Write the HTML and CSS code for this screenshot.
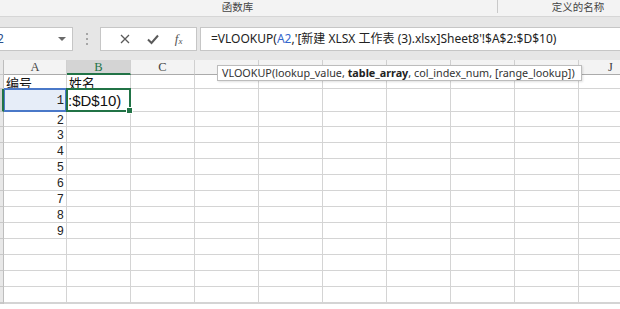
FILE: index.html
```html
<!DOCTYPE html>
<html lang="zh-CN">
<head>
  <meta charset="UTF-8" />
  <title>VLOOKUP</title>
  <link rel="stylesheet" href="styles.css">
</head>
<body>
  <div class="ribbon">
    <div class="group group-func">函数库</div>
    <div class="group group-name">定义的名称</div>
  </div>

  <div class="fbar">
    <div class="namebox">
      <span class="nb-text">2</span>
      <span class="nb-arrow"></span>
    </div>
    <div class="grip"><i></i><i></i><i></i></div>
    <div class="fbtns">
      <svg width="12" height="12" viewBox="0 0 12 12"><path d="M2 2 L10 10 M10 2 L2 10" stroke="#5a5a5a" stroke-width="1.3" fill="none"/></svg>
      <svg width="14" height="12" viewBox="0 0 14 12"><path d="M2 6.5 L5.5 10 L12 2.5" stroke="#5a5a5a" stroke-width="2" fill="none"/></svg>
      <span class="fx">f<sub>x</sub></span>
    </div>
    <div class="finput">=VLOOKUP(<span class="ref">A2</span>,'[新建 XLSX 工作表 (3).xlsx]Sheet8'!$A$2:$D$10)</div>
  </div>

  <div class="sheet">
    <div class="grid" id="grid"></div>
    <div class="tip">VLOOKUP(lookup_value, <b>table_array</b>, col_index_num, [range_lookup])</div>
  </div>

  <script>
    // header letters under the tooltip are covered, so only these show
    const cols = ["A", "B", "C", "", "", "", "", "", "", "J"];
    const rows = [
      ["编号", "姓名"],
      ["1", ":$D$10)"],
      ["2"], ["3"], ["4"], ["5"], ["6"], ["7"], ["8"], ["9"],
      [], [], [], [], []
    ];

    function buildGrid() {
      const grid = document.getElementById("grid");
      let html = '<div class="strip"></div>';
      html += cols.map(c => `<div class="hdr${c === "B" ? " active" : ""}">${c}</div>`).join("");

      rows.forEach((row, r) => {
        html += `<div class="strip${r === 1 ? " cur" : ""}"></div>`;
        cols.forEach((c, i) => {
          const val = row[i] || "";
          let cls = "cell";
          if (r === 0) cls += " cjk";
          else if (i === 0 && val) cls += " num";
          if (r === 1 && i === 0) cls += " ref-sel";
          if (r === 1 && i === 1) cls += " active-cell";
          html += `<div class="${cls}">${val}</div>`;
        });
      });
      grid.innerHTML = html;
    }

    buildGrid();
  </script>
</body>
</html>
```

FILE: styles.css
```css
* {
  box-sizing: border-box;
  margin: 0;
  padding: 0;
}
body {
  width: 620px;
  height: 309px;
  overflow: hidden;
  background: #fff;
  font-family: "Noto Sans", "Noto Sans CJK SC", sans-serif;
}

/* ribbon group labels */
.ribbon {
  display: flex;
  height: 17px;
  background: #f3f3f3;
  border-bottom: 1px solid #d6d6d6;
  overflow: hidden;
}
.group {
  font-size: 10.5px;
  line-height: 15px;
  color: #444;
  text-align: center;
  flex: none;
}
.group-func {
  width: 498px;
  padding-right: 22px;
  border-right: 1px solid #c9c9c9;
  height: 13px;
}
.group-name {
  width: 160px;
}

/* formula bar */
.fbar {
  display: flex;
  align-items: center;
  height: 43px;
  background: #e6e6e6;
  padding-bottom: 9px;
  padding-top: 9px;
}
.namebox {
  width: 73px;
  height: 24px;
  background: #fff;
  border: 1px solid #c6c6c6;
  border-left: none;
  display: flex;
  align-items: center;
  justify-content: space-between;
  padding-right: 6px;
}
.nb-text {
  font-size: 12px;
  color: #2b4f8c;
  margin-left: -3px;
}
.nb-arrow {
  width: 0;
  height: 0;
  border-left: 4px solid transparent;
  border-right: 4px solid transparent;
  border-top: 4px solid #6a6a6a;
}
.grip {
  width: 27px;
  display: flex;
  flex-direction: column;
  align-items: center;
  gap: 3px;
}
.grip i {
  width: 2px;
  height: 2px;
  background: #a6a6a6;
}
.fbtns {
  width: 97px;
  height: 24px;
  background: #fff;
  border: 1px solid #c6c6c6;
  display: flex;
  align-items: center;
  justify-content: space-around;
  padding: 0 6px 0 10px;
}
.fx {
  font-family: "Liberation Serif", serif;
  font-style: italic;
  font-size: 13px;
  color: #555;
  line-height: 1;
}
.fx sub {
  font-size: 9px;
  vertical-align: -1px;
}
.finput {
  flex: 1;
  margin-left: 3px;
  height: 24px;
  background: #fff;
  border: 1px solid #c6c6c6;
  border-right: none;
  font-size: 12px;
  line-height: 22px;
  padding-left: 10px;
  color: #222;
  white-space: nowrap;
  overflow: hidden;
}
.finput .ref {
  color: #3366cc;
}

/* sheet */
.sheet {
  position: relative;
}
.grid {
  display: grid;
  grid-template-columns: 4px 63px repeat(9, 64px);
  grid-template-rows: 15px 14px 23px 15px repeat(11, 16px);
  width: 647px;
}
.strip {
  background: #e8e8e8;
  border-right: 1px solid #bdbdbd;
  border-bottom: 1px solid #c8c8c8;
}
.strip.cur {
  background: #d2d2d2;
  border-right: 2px solid #217346;
}
.hdr {
  background: #f3f3f3;
  border-right: 1px solid #d0d0d0;
  border-bottom: 1px solid #ababab;
  font-family: "Liberation Serif", serif;
  font-size: 12.5px;
  line-height: 15px;
  color: #444;
  text-align: center;
}
.hdr.active {
  background: #d4d4d4;
  color: #217346;
  border-bottom: 2px solid #217346;
}
.cell {
  position: relative;
  border-right: 1px solid #d4d4d4;
  border-bottom: 1px solid #d4d4d4;
  font-size: 12px;
  line-height: 15px;
  color: #222;
  white-space: nowrap;
}
.cell.cjk {
  font-family: "Noto Sans CJK SC", sans-serif;
  font-size: 13px;
  line-height: 15px;
  padding-left: 2px;
  color: #111;
}
.cell.num {
  font-family: "Liberation Mono", monospace;
  text-align: right;
  padding-right: 2px;
  padding-top: 1px;
  line-height: 16px;
}
.cell.ref-sel {
  background: #e6edf8;
  line-height: 24px;
  padding-top: 0;
}
.cell.ref-sel::after {
  content: "";
  position: absolute;
  inset: -1px -1px -1px 0;
  border: 2px solid #4a78c8;
  border-left-width: 1px;
}
.cell.active-cell {
  font-family: "Liberation Sans", sans-serif;
  font-size: 15px;
  line-height: 24px;
  padding-left: 1px;
  color: #111;
}
.cell.active-cell::after {
  content: "";
  position: absolute;
  inset: -1px -1px -1px -1px;
  border: 2px solid #217346;
}
.cell.active-cell::before {
  content: "";
  position: absolute;
  right: -3px;
  bottom: -3px;
  width: 5px;
  height: 5px;
  background: #217346;
  border: 1px solid #fff;
  z-index: 2;
}

/* function argument tooltip */
.tip {
  position: absolute;
  left: 217px;
  top: 5px;
  width: 365px;
  height: 16px;
  background: #fff;
  border: 1px solid #bcbcbc;
  box-shadow: 1px 1px 2px rgba(0, 0, 0, 0.12);
  font-size: 10.8px;
  line-height: 14px;
  color: #333;
  padding-left: 4px;
  white-space: nowrap;
}
.tip b {
  font-weight: bold;
  color: #222;
}
```
